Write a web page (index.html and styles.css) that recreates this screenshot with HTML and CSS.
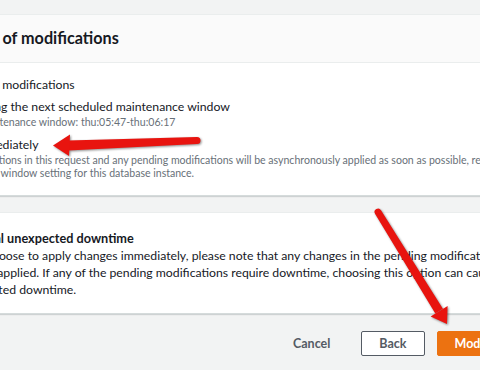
FILE: index.html
```html
<!DOCTYPE html>
<html lang="en">
<head>
<meta charset="utf-8">
<title>Modify DB instance</title>
<link rel="stylesheet" href="styles.css">
</head>
<body>
<div class="page">
  <section class="panel">
    <header class="panel-header">
      <h2 class="panel-title">Scheduling of modifications</h2>
    </header>
    <div class="panel-body">
      <div class="field-label">When to apply modifications</div>
      <div class="radio-group">
        <label class="radio">
          <span class="radio-dot"></span>
          <span class="radio-text">
            <span class="radio-label">Apply during the next scheduled maintenance window</span>
            <span class="radio-desc">Current maintenance window: thu:05:47-thu:06:17</span>
          </span>
        </label>
        <label class="radio">
          <span class="radio-dot checked"></span>
          <span class="radio-text">
            <span class="radio-label">Apply immediately</span>
            <span class="radio-desc">The modifications in this request and any pending modifications will be asynchronously applied as soon as possible, regardless of the maintenance window setting for this database instance.</span>
          </span>
        </label>
      </div>
    </div>
  </section>

  <section class="panel alert">
    <div class="alert-icon">
      <svg width="20" height="20" viewBox="0 0 20 20"><path d="M10 2 L19 18 H1 Z" fill="none" stroke="#16191f" stroke-width="2" stroke-linejoin="round"/><path d="M10 8 V12 M10 14.5 V15" stroke="#16191f" stroke-width="2" stroke-linecap="round"/></svg>
    </div>
    <div class="alert-body">
      <div class="alert-title">Potential unexpected downtime</div>
      <p class="alert-text">If you choose to apply changes immediately, please note that any changes in the pending modifications queue are also applied. If any of the pending modifications require downtime, choosing this option can cause unexpected downtime.</p>
    </div>
  </section>

  <div class="actions">
    <button class="btn btn-link">Cancel</button>
    <button class="btn btn-normal">Back</button>
    <button class="btn btn-primary">Modify DB Instance</button>
  </div>
</div>

<svg class="annotations" width="480" height="370" viewBox="0 0 480 370">
  <g fill="#e8140f">
    <path d="M68,140.5 L197,137 A3.5,3.5 0 0 1 197,144 L68,150.5 Z"/>
    <path d="M53,145.5 L70,134.5 L69,156 Z"/>
    <path d="M435.3,313.6 L375,213.8 A3.5,3.5 0 0 1 381,210.2 L442.9,308.8 Z"/>
    <path d="M447,324 L447.6,305.9 L430.6,316.5 Z"/>
  </g>
</svg>
</body>
</html>
```
FILE: styles.css
```css
html, body {
  margin: 0;
  padding: 0;
  background: #f2f3f3;
  overflow: hidden;
  height: 370px;
}
body {
  font-family: Lato, "Liberation Sans", sans-serif;
  color: #16191f;
  font-size: 12.25px;
}
.page {
  margin-left: -100px;
  width: 720px;
  padding-top: 14px;
}
.panel {
  background: #fff;
  border-top: 1px solid #eaeded;
  border-bottom: 1px solid #d5dbdb;
  box-shadow: 0 1px 1px 0 rgba(0, 28, 36, 0.15);
}
.panel-header {
  height: 48px;
  box-sizing: border-box;
  display: flex;
  align-items: center;
  padding: 0 20px 3px;
  background: #fafafa;
  border-bottom: 1px solid #eaeded;
}
.panel-title {
  margin: 0;
  font-size: 16.2px;
  font-weight: 700;
  color: #16191f;
}
.panel-body {
  padding: 14px 20px 15px;
}
.field-label {
  line-height: 16px;
}
.radio-group {
  display: flex;
  flex-direction: column;
  gap: 8px;
  margin-top: 6px;
}
.radio {
  display: flex;
  gap: 7px;
  align-items: flex-start;
}
.radio-dot {
  flex: none;
  width: 12px;
  height: 12px;
  margin-top: 2px;
  border: 1px solid #687078;
  border-radius: 50%;
  box-sizing: border-box;
}
.radio-dot.checked {
  border: 4px solid #0073bb;
}
.radio-text {
  display: flex;
  flex-direction: column;
  max-width: 660px;
}
.radio-label {
  line-height: 16px;
}
.radio-desc {
  margin-top: 1px;
  font-size: 10.55px;
  line-height: 13px;
  color: #687078;
}
.alert {
  margin-top: 16px;
  display: flex;
  gap: 13px;
  padding: 17px 73px 15px 20px;
}
.alert-icon {
  flex: none;
  width: 20px;
  height: 17px;
}
.alert-title {
  font-size: 12.7px;
  font-weight: 700;
  line-height: 17px;
}
.alert-text {
  margin: 0;
  line-height: 17px;
}
.actions {
  display: flex;
  gap: 12px;
  margin-top: 17px;
  padding-left: 374px;
}
.btn {
  height: 25px;
  padding: 0 17px;
  border: 1px solid transparent;
  border-radius: 2px;
  font-family: Lato, "Liberation Sans", sans-serif;
  font-size: 12.5px;
  font-weight: 700;
  white-space: nowrap;
  cursor: pointer;
}
.btn-link {
  padding: 0 18px;
  background: transparent;
  color: #545b64;
}
.btn-normal {
  background: #fff;
  border-color: #545b64;
  color: #545b64;
}
.btn-primary {
  background: #ec7211;
  border-color: #ec7211;
  color: #fff;
}
.annotations {
  position: absolute;
  left: 0;
  top: 0;
  pointer-events: none;
  filter: drop-shadow(1px 1px 1px rgba(0, 0, 0, 0.45));
}
```
